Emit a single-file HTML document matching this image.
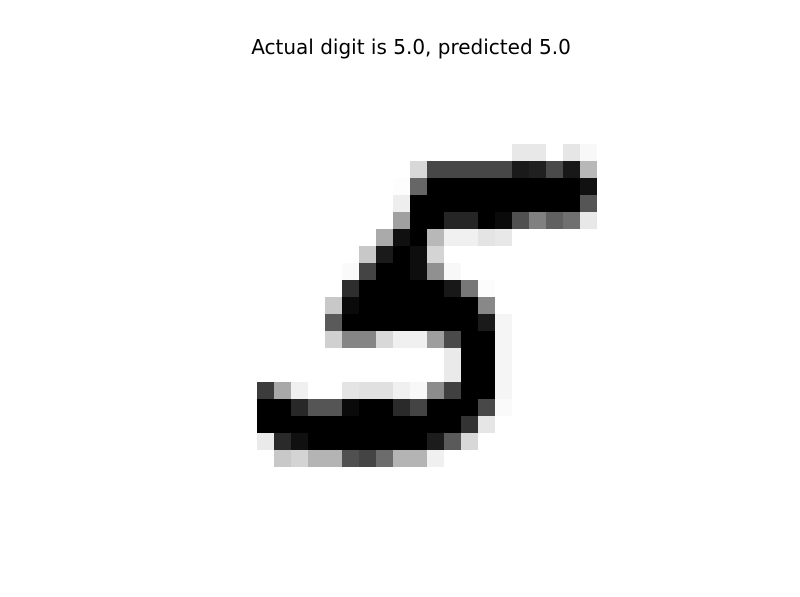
<!DOCTYPE html>
<html><head><meta charset="utf-8"><style>
html,body{margin:0;padding:0;background:#fff;width:800px;height:597px;overflow:hidden}
svg{display:block}
</style></head><body>
<svg width="800" height="597" viewBox="0 0 800 597" xmlns="http://www.w3.org/2000/svg">
<rect width="800" height="597" fill="#fff"/>
<text x="411" y="54" text-anchor="middle" font-family="DejaVu Sans, Liberation Sans, sans-serif" font-size="20" fill="#000">Actual digit is 5.0, predicted 5.0</text>
<g transform="translate(257,144) scale(17)" shape-rendering="crispEdges">
<rect x="15" y="0" width="2" height="1" fill="#e8e8e8"/>
<rect x="18" y="0" width="1" height="1" fill="#e6e6e6"/>
<rect x="19" y="0" width="1" height="1" fill="#f8f8f8"/>
<rect x="9" y="1" width="1" height="1" fill="#d8d8d8"/>
<rect x="10" y="1" width="5" height="1" fill="#474747"/>
<rect x="15" y="1" width="1" height="1" fill="#1a1a1a"/>
<rect x="16" y="1" width="1" height="1" fill="#202020"/>
<rect x="17" y="1" width="1" height="1" fill="#4a4a4a"/>
<rect x="18" y="1" width="1" height="1" fill="#181818"/>
<rect x="19" y="1" width="1" height="1" fill="#b8b8b8"/>
<rect x="8" y="2" width="1" height="1" fill="#fdfdfd"/>
<rect x="9" y="2" width="1" height="1" fill="#666"/>
<rect x="10" y="2" width="9" height="1" fill="#000"/>
<rect x="19" y="2" width="1" height="1" fill="#111"/>
<rect x="8" y="3" width="1" height="1" fill="#eee"/>
<rect x="9" y="3" width="10" height="1" fill="#000"/>
<rect x="19" y="3" width="1" height="1" fill="#555"/>
<rect x="8" y="4" width="1" height="1" fill="#a0a0a0"/>
<rect x="9" y="4" width="2" height="1" fill="#000"/>
<rect x="11" y="4" width="2" height="1" fill="#252525"/>
<rect x="13" y="4" width="1" height="1" fill="#000"/>
<rect x="14" y="4" width="1" height="1" fill="#0a0a0a"/>
<rect x="15" y="4" width="1" height="1" fill="#505050"/>
<rect x="16" y="4" width="1" height="1" fill="#808080"/>
<rect x="17" y="4" width="1" height="1" fill="#606060"/>
<rect x="18" y="4" width="1" height="1" fill="#707070"/>
<rect x="19" y="4" width="1" height="1" fill="#e8e8e8"/>
<rect x="7" y="5" width="1" height="1" fill="#aaa"/>
<rect x="8" y="5" width="1" height="1" fill="#101010"/>
<rect x="9" y="5" width="1" height="1" fill="#000"/>
<rect x="10" y="5" width="1" height="1" fill="#b8b8b8"/>
<rect x="11" y="5" width="2" height="1" fill="#f0f0f0"/>
<rect x="13" y="5" width="1" height="1" fill="#e4e4e4"/>
<rect x="14" y="5" width="1" height="1" fill="#e8e8e8"/>
<rect x="6" y="6" width="1" height="1" fill="#c8c8c8"/>
<rect x="7" y="6" width="1" height="1" fill="#1a1a1a"/>
<rect x="8" y="6" width="1" height="1" fill="#000"/>
<rect x="9" y="6" width="1" height="1" fill="#0e0e0e"/>
<rect x="10" y="6" width="1" height="1" fill="#d4d4d4"/>
<rect x="5" y="7" width="1" height="1" fill="#fafafa"/>
<rect x="6" y="7" width="1" height="1" fill="#444"/>
<rect x="7" y="7" width="2" height="1" fill="#000"/>
<rect x="9" y="7" width="1" height="1" fill="#0e0e0e"/>
<rect x="10" y="7" width="1" height="1" fill="#909090"/>
<rect x="11" y="7" width="1" height="1" fill="#f8f8f8"/>
<rect x="5" y="8" width="1" height="1" fill="#2e2e2e"/>
<rect x="6" y="8" width="5" height="1" fill="#000"/>
<rect x="11" y="8" width="1" height="1" fill="#181818"/>
<rect x="12" y="8" width="1" height="1" fill="#777"/>
<rect x="13" y="8" width="1" height="1" fill="#fcfcfc"/>
<rect x="4" y="9" width="1" height="1" fill="#c8c8c8"/>
<rect x="5" y="9" width="1" height="1" fill="#0a0a0a"/>
<rect x="6" y="9" width="7" height="1" fill="#000"/>
<rect x="13" y="9" width="1" height="1" fill="#888"/>
<rect x="4" y="10" width="1" height="1" fill="#5a5a5a"/>
<rect x="5" y="10" width="8" height="1" fill="#000"/>
<rect x="13" y="10" width="1" height="1" fill="#1a1a1a"/>
<rect x="14" y="10" width="1" height="5" fill="#f5f5f5"/>
<rect x="4" y="11" width="1" height="1" fill="#d0d0d0"/>
<rect x="5" y="11" width="2" height="1" fill="#858585"/>
<rect x="7" y="11" width="1" height="1" fill="#d8d8d8"/>
<rect x="8" y="11" width="2" height="1" fill="#f0f0f0"/>
<rect x="10" y="11" width="1" height="1" fill="#9e9e9e"/>
<rect x="11" y="11" width="1" height="1" fill="#4a4a4a"/>
<rect x="12" y="11" width="2" height="4" fill="#000"/>
<rect x="11" y="12" width="1" height="2" fill="#eaeaea"/>
<rect x="0" y="14" width="1" height="1" fill="#3c3c3c"/>
<rect x="1" y="14" width="1" height="1" fill="#a8a8a8"/>
<rect x="2" y="14" width="1" height="1" fill="#f0f0f0"/>
<rect x="5" y="14" width="1" height="1" fill="#e4e4e4"/>
<rect x="6" y="14" width="2" height="1" fill="#e0e0e0"/>
<rect x="8" y="14" width="1" height="1" fill="#f0f0f0"/>
<rect x="9" y="14" width="1" height="1" fill="#f8f8f8"/>
<rect x="10" y="14" width="1" height="1" fill="#8c8c8c"/>
<rect x="11" y="14" width="1" height="1" fill="#404040"/>
<rect x="0" y="15" width="2" height="1" fill="#000"/>
<rect x="2" y="15" width="1" height="1" fill="#282828"/>
<rect x="3" y="15" width="2" height="1" fill="#555"/>
<rect x="5" y="15" width="1" height="1" fill="#0a0a0a"/>
<rect x="6" y="15" width="2" height="1" fill="#000"/>
<rect x="8" y="15" width="1" height="1" fill="#2a2a2a"/>
<rect x="9" y="15" width="1" height="1" fill="#444"/>
<rect x="10" y="15" width="3" height="1" fill="#000"/>
<rect x="13" y="15" width="1" height="1" fill="#484848"/>
<rect x="14" y="15" width="1" height="1" fill="#fafafa"/>
<rect x="0" y="16" width="12" height="1" fill="#000"/>
<rect x="12" y="16" width="1" height="1" fill="#333"/>
<rect x="13" y="16" width="1" height="1" fill="#e6e6e6"/>
<rect x="0" y="17" width="1" height="1" fill="#eaeaea"/>
<rect x="1" y="17" width="1" height="1" fill="#2a2a2a"/>
<rect x="2" y="17" width="1" height="1" fill="#101010"/>
<rect x="3" y="17" width="7" height="1" fill="#000"/>
<rect x="10" y="17" width="1" height="1" fill="#1c1c1c"/>
<rect x="11" y="17" width="1" height="1" fill="#5a5a5a"/>
<rect x="12" y="17" width="1" height="1" fill="#d8d8d8"/>
<rect x="1" y="18" width="1" height="1" fill="#c8c8c8"/>
<rect x="2" y="18" width="1" height="1" fill="#d4d4d4"/>
<rect x="3" y="18" width="2" height="1" fill="#b4b4b4"/>
<rect x="5" y="18" width="1" height="1" fill="#505050"/>
<rect x="6" y="18" width="1" height="1" fill="#444"/>
<rect x="7" y="18" width="1" height="1" fill="#6c6c6c"/>
<rect x="8" y="18" width="2" height="1" fill="#b4b4b4"/>
<rect x="10" y="18" width="1" height="1" fill="#f0f0f0"/>
</g>
</svg>
</body></html>
